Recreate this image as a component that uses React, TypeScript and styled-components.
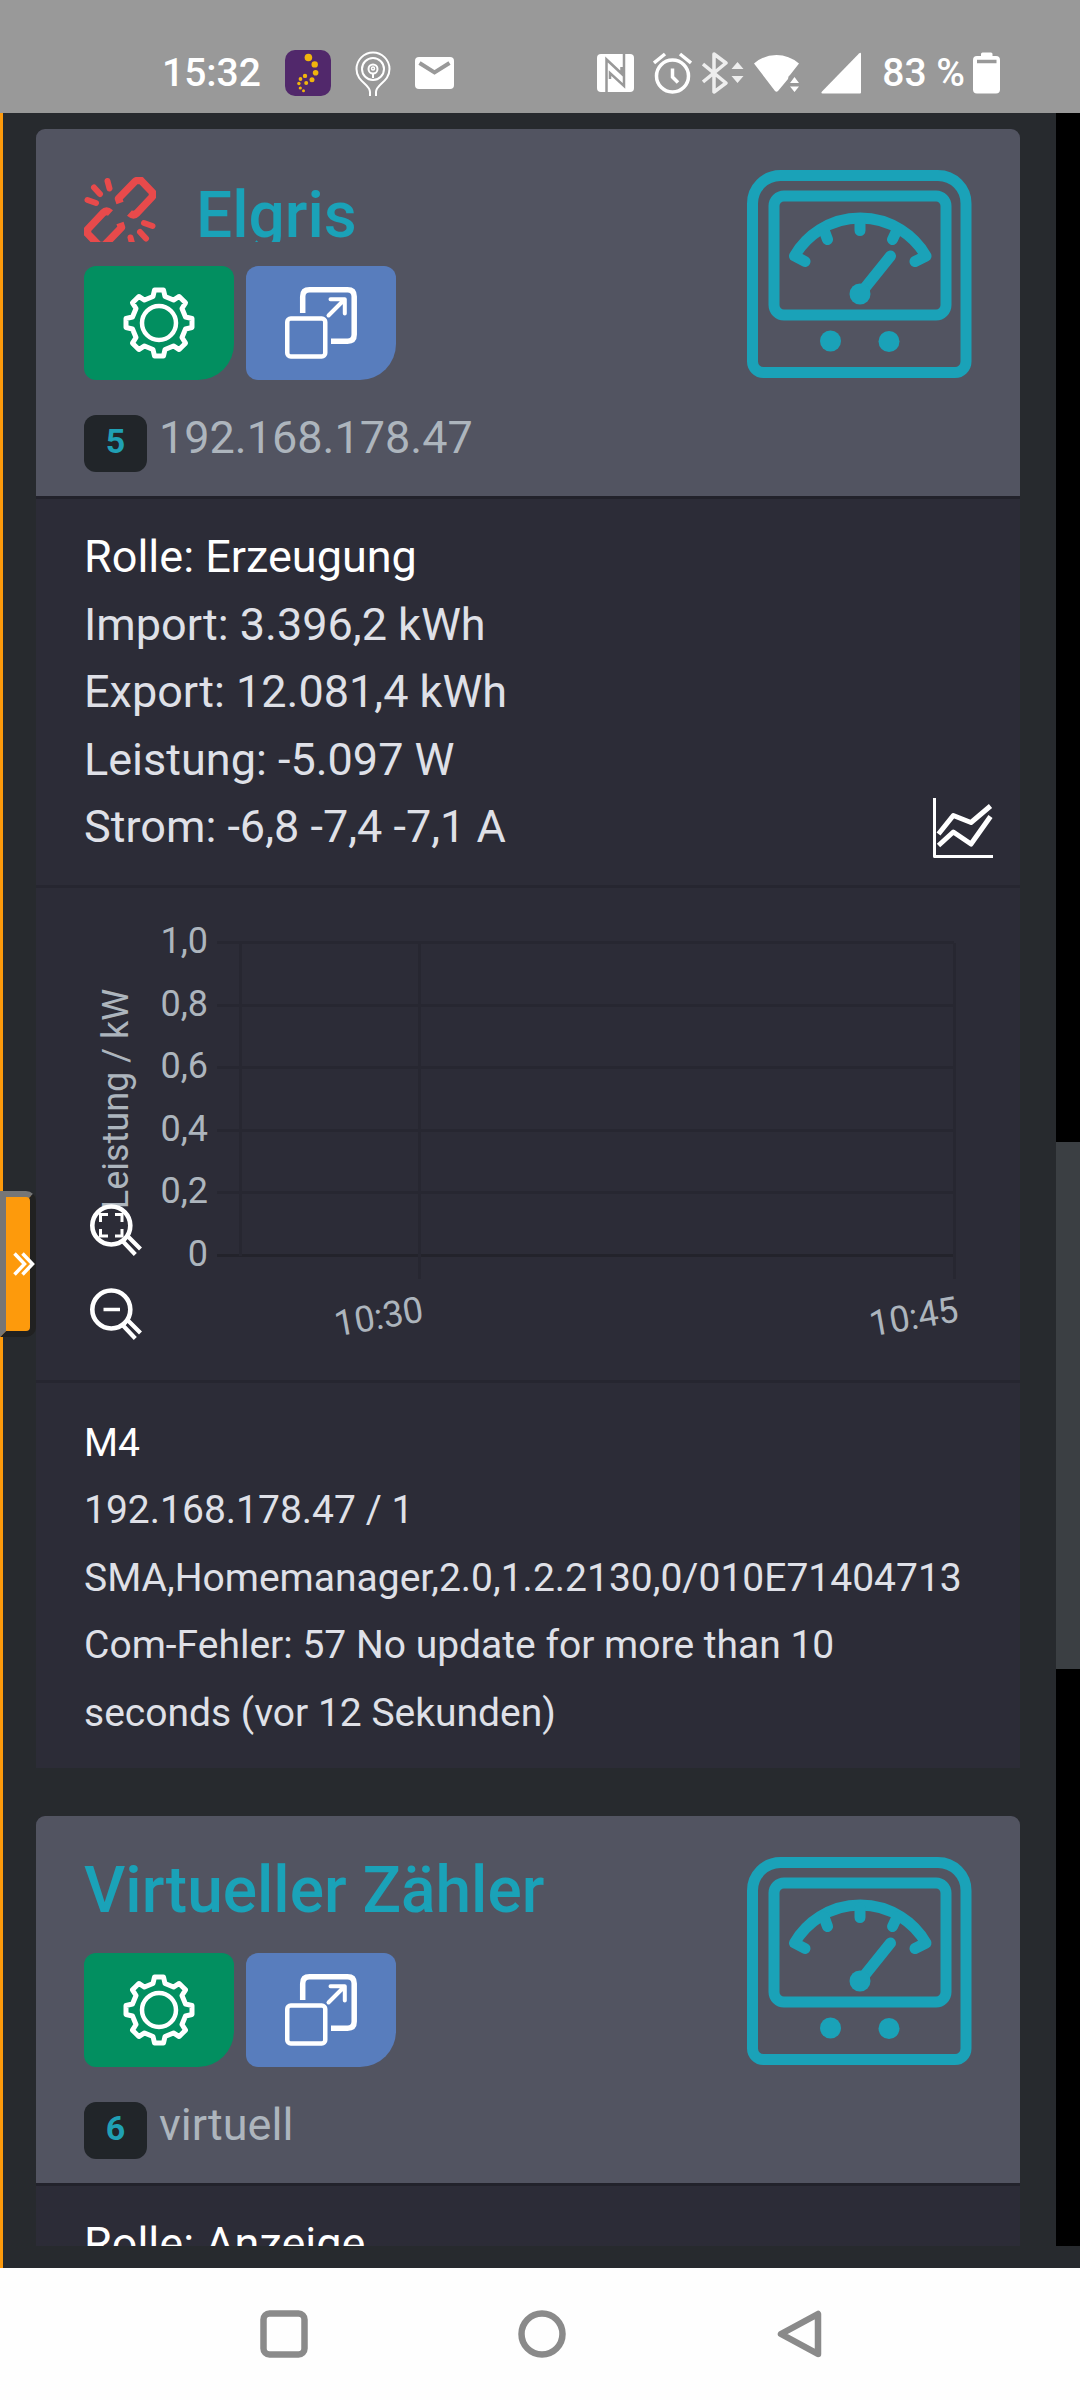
import React from "react";
import styled, { createGlobalStyle } from "styled-components";

const GlobalStyle = createGlobalStyle`
  *, *::before, *::after { box-sizing: border-box; }
  html, body { margin: 0; padding: 0; }
  body {
    background: #272a2e;
    font-family: Roboto, "Noto Sans", sans-serif;
    font-size: 45px;
    line-height: 1.5;
    color: #dfe0e7;
  }
  svg { display: block; flex: none; }
`;

const Screen = styled.div`
  display: flex;
  flex-direction: column;
  height: 100vh;
`;

/* ---------- system bars ---------- */

const StatusBar = styled.header`
  display: flex;
  flex: none;
  align-items: center;
  justify-content: space-between;
  height: 113px;
  padding: 33px 80px 0 162px;
  background: #999999;
  color: #ffffff;
  font-size: 39px;
  font-weight: 500;
  line-height: 48px;
`;

const StatusGroup = styled.div<{ $gap: number }>`
  display: flex;
  align-items: center;
  gap: ${(p) => p.$gap}px;
`;

const NavBar = styled.nav`
  display: flex;
  flex: none;
  align-items: center;
  justify-content: center;
  gap: 210px;
  height: 132px;
  padding-left: 4px;
  background: #fefefe;
`;

const BareButton = styled.button`
  display: block;
  margin: 0;
  padding: 0;
  border: 0;
  background: none;
  color: inherit;
  font: inherit;
`;

/* ---------- app shell ---------- */

const Main = styled.main`
  position: relative;
  display: flex;
  flex: 1;
  flex-direction: column;
  min-height: 0;
  padding-bottom: 22px;
  border-left: 3px solid #fd9a0c;
`;

const Viewport = styled.div`
  display: flex;
  flex: 1;
  min-height: 0;
`;

const Cards = styled.div`
  display: flex;
  flex: 1;
  flex-direction: column;
  gap: 48px;
  min-width: 0;
  padding: 16px 36px 0 33px;
  overflow: hidden;
`;

const Track = styled.div`
  display: grid;
  flex: none;
  grid-template-rows: 1029fr 528fr 577fr;
  width: 24px;
  background: #000000;
`;

const Thumb = styled.div`
  grid-row: 2;
  background: #3b3f43;
`;

const DrawerTab = styled.button`
  position: absolute;
  top: 50%;
  left: -3px;
  display: flex;
  align-items: center;
  width: 36px;
  height: 146px;
  padding: 0 0 0 7px;
  border: 6px solid;
  border-color: #767676 #212121 #212121 #767676;
  border-radius: 0 10px 10px 0;
  background: #fd9a0c;
`;

/* ---------- meter card ---------- */

const Card = styled.article`
  flex: none;
  border-radius: 9px 9px 0 0;
  background: #2c2c37;
`;

const CardHeader = styled.header`
  display: flex;
  justify-content: space-between;
  height: 370px;
  padding: 36px 48px 0;
  border-bottom: 3px solid #22222b;
  border-radius: 9px 9px 0 0;
  background: #525461;
`;

const HeaderMain = styled.div`
  display: flex;
  flex-direction: column;
  align-items: flex-start;
`;

const Title = styled.h2<{ $offline: boolean }>`
  display: flex;
  gap: 40px;
  height: 77px;
  margin: 0;
  padding-top: ${(p) => (p.$offline ? 12 : 0)}px;
  overflow: hidden;
  color: #1aa2b8;
  font-size: 64px;
  font-weight: 500;
  line-height: 77px;
  white-space: nowrap;
`;

const Actions = styled.div`
  display: flex;
  gap: 12px;
  margin-top: 24px;
`;

const ActionButton = styled.button<{ $tone: "green" | "blue" }>`
  display: flex;
  align-items: center;
  justify-content: center;
  width: 150px;
  height: 114px;
  padding: 0;
  border: 0;
  border-radius: 12px 12px 36px 12px;
  background: ${(p) => (p.$tone === "green" ? "#028f60" : "#587dbd")};
  color: #ffffff;
`;

const Address = styled.div`
  display: flex;
  gap: 12px;
  margin-top: 24px;
  color: #adb5bd;
`;

const Badge = styled.span`
  flex: none;
  min-width: 63px;
  height: 57px;
  margin-top: 11px;
  border-radius: 12px;
  background: #212529;
  color: #20a0b4;
  font-size: 34px;
  font-weight: 700;
  line-height: 53px;
  text-align: center;
`;

const MeterSlot = styled.div`
  padding-top: 5px;
  color: #1aa2b8;
`;

const Section = styled.section<{ $wide?: boolean }>`
  display: flex;
  align-items: flex-end;
  justify-content: space-between;
  padding: 24px ${(p) => (p.$wide ? 24 : 48)}px 24px 48px;

  & + & {
    border-top: 3px solid #262630;
  }
`;

const ChartSection = styled(Section)`
  position: relative;
  display: block;
  padding: 0;
`;

const Lines = styled.ul`
  margin: 0;
  padding: 0;
  list-style: none;
`;

const Line = styled.li<{ $lead?: boolean }>`
  color: ${(p) => (p.$lead ? "#ffffff" : "inherit")};
`;

const Small = styled.small`
  font-size: 39px;
`;

const ChartToggle = styled(BareButton)`
  padding: 3px;
  color: #ffffff;
`;

const ChartSvg = styled.svg`
  width: 100%;
  height: auto;

  text {
    fill: #adb5bd;
    font-size: 36px;
  }
`;

const ZoomTools = styled.div`
  position: absolute;
  bottom: 40px;
  left: 54px;
  display: flex;
  flex-direction: column;
  gap: 32px;
  color: #ffffff;
`;

/* ---------- icons ---------- */

const stroke = {
  fill: "none",
  stroke: "currentColor",
  strokeLinecap: "round",
  strokeLinejoin: "round",
} as const;

const MeterIcon = () => (
  <svg width="225" height="208" viewBox="0 0 225 208" {...stroke} strokeWidth="11">
    <path d="M5.500 33.500A28 28 0 0 1 33.500 5.500H191a28 28 0 0 1 28 28V191.500a11 11 0 0 1-11 11H16.500a11 11 0 0 1-11-11Z" />
    <rect x="27" y="26" width="172" height="119" rx="10" />
    <path d="M58 91.500L47.500 86A76 76 0 0 1 179 86L168 91.500" />
    <path d="M113 51V60.500M77 60L80.500 69.500M150 60L145.500 69.500M113 124L143.500 86" />
    <g fill="currentColor" stroke="none">
      <circle cx="113" cy="124" r="10.500" />
      <circle cx="83.500" cy="171" r="10.500" />
      <circle cx="142" cy="171.500" r="10.500" />
    </g>
  </svg>
);

const LINK_HALF = "M36 26L34.500 21.500L51 4.500Q52 3.500 54 3.500H57L68.500 15.500V19.500L53 36Q49.500 39.500 45.500 36";

const BrokenLinkIcon = () => (
  <svg width="72" height="72" viewBox="0 0 72 72" {...stroke} strokeLinecap="butt" color="#e84a4b">
    {[0, 180].map((a) => (
      <g key={a} transform={`rotate(${a} 36 36)`}>
        <path d={LINK_HALF} strokeWidth="7.500" />
        <path d="M23.500 4L25.500 11.500M10 10.500L16 17M3.500 23L12 26" strokeWidth="6" strokeLinecap="round" />
      </g>
    ))}
  </svg>
);

const gearPath = () => {
  const tooth = [[-6, -26.5], [-4.5, -33], [4.5, -33], [6, -26.5]];
  const points: string[] = [];
  for (let k = 0; k < 8; k += 1) {
    const a = (k * Math.PI) / 4;
    tooth.forEach(([x, y]) => {
      const px = 36 + x * Math.cos(a) - y * Math.sin(a);
      const py = 36 + x * Math.sin(a) + y * Math.cos(a);
      points.push(`${px.toFixed(2)} ${py.toFixed(2)}`);
    });
  }
  return `M${points.join("L")}Z`;
};

const GearIcon = () => (
  <svg width="72" height="72" viewBox="0 0 72 72" {...stroke} strokeWidth="5">
    <path d={gearPath()} />
    <circle cx="36" cy="36" r="17" strokeWidth="4.500" />
  </svg>
);

const PopOutIcon = () => (
  <svg width="72" height="72" viewBox="0 0 72 72" {...stroke} strokeWidth="4.500">
    <rect x="2.250" y="31.500" width="38" height="38" rx="3.500" />
    <path d="M17.700 26V9.500Q17.700 2.800 24.500 2.800H62.500Q69.200 2.800 69.200 9.500V47.500Q69.200 54.200 62.500 54.200H46" strokeWidth="5.500" strokeLinecap="butt" />
    <path d="M45.500 12.200H59.800V26.500M59.500 12.500L43.500 28.500" strokeWidth="4" />
  </svg>
);

const LineChartIcon = () => (
  <svg width="60" height="60" viewBox="0 0 60 60" fill="none" stroke="currentColor" strokeLinejoin="round">
    <path d="M1.500 0V58.500H60" strokeWidth="3" />
    <path d="M5.500 36L20.300 17.500L38 24.500L57.500 8M5.500 47.500L20.300 34L38 46L57.500 18.500" strokeWidth="5" />
  </svg>
);

const Magnifier = ({ children }: { children: React.ReactNode }) => (
  <svg width="52" height="52" viewBox="0 0 52 52" fill="none" stroke="currentColor">
    <circle cx="21.300" cy="21.500" r="19" strokeWidth="4.600" />
    <path d="M33 37.500L45.300 50.500M38 32.500L50.500 45" strokeWidth="4.200" />
    {children}
  </svg>
);

const ChevronsIcon = () => (
  <svg width="23" height="24" viewBox="0 0 23 24" fill="none" stroke="#ffffff" strokeWidth="3.500">
    <path d="M1.500 1.500L11.500 12L1.500 22.500M9.500 1.500L19.500 12L9.500 22.500" />
  </svg>
);

/* ---------- status icons ---------- */

const AppBadgeIcon = () => (
  <svg width="46" height="46" viewBox="0 0 46 46">
    <rect width="46" height="46" rx="10" fill="#51286b" />
    <g fill="#f0b50d">
      <circle cx="23.400" cy="7.500" r="3.800" />
      <circle cx="29.700" cy="14.400" r="3.200" />
      <circle cx="30.600" cy="22.800" r="2.800" />
      <circle cx="27" cy="29.700" r="2.500" />
      <circle cx="21.200" cy="33.100" r="2" />
      <circle cx="20" cy="25.900" r="2.200" />
      <circle cx="15.500" cy="29" r="1.900" />
      <circle cx="13.900" cy="33.500" r="1.700" />
      <circle cx="15.300" cy="38" r="1.600" />
      <circle cx="18.500" cy="40.700" r="1.500" />
    </g>
  </svg>
);

const BeaconIcon = () => (
  <svg width="36" height="45" viewBox="0 0 36 45" fill="none" stroke="#ffffff" strokeWidth="2">
    <path d="M15 45V41C15 33 1.500 31 1.500 18A16.500 16.500 0 0 1 34.500 18C34.500 31 21 33 21 41V45" />
    <circle cx="18" cy="18" r="11" />
    <circle cx="18" cy="18" r="4.500" />
    <path d="M18 23V27" />
    <circle cx="18" cy="17.500" r="1.500" strokeWidth="1.500" />
  </svg>
);

const MailIcon = () => (
  <svg width="39" height="32" viewBox="0 0 39 32">
    <rect width="39" height="32" rx="4" fill="#ffffff" />
    <path d="M4.500 6L19.500 15.500L34.500 6" fill="none" stroke="#999999" strokeWidth="4" />
  </svg>
);

const NfcIcon = () => (
  <svg width="46" height="38" viewBox="0 0 46 38">
    <rect width="37" height="38" rx="4" fill="#ffffff" />
    <path d="M9.500 38V5.500L24.500 19.500V13M27 0V32L13 19V25" fill="none" stroke="#999999" strokeWidth="2.500" />
  </svg>
);

const AlarmIcon = () => (
  <svg width="39" height="42" viewBox="0 0 39 42" fill="none" stroke="#ffffff" strokeWidth="3.500">
    <circle cx="19.500" cy="24" r="16" />
    <path d="M19.500 16.500V25L25 30.500M1 11L12 2M38 11L27 2" />
  </svg>
);

const BluetoothIcon = () => (
  <svg width="42" height="42" viewBox="0 0 42 42" fill="none" stroke="#eeeeee" strokeWidth="3.500">
    <path d="M1 12L24 31L12 40V2L24 11L1 30" strokeLinejoin="round" />
    <path d="M35.500 10L41.500 17H29.500ZM35.500 31L41.500 24H29.500Z" fill="#eeeeee" stroke="none" />
  </svg>
);

const WifiIcon = () => (
  <svg width="57" height="42" viewBox="0 0 57 42" fill="#ffffff">
    <path d="M0 11.500Q10 3 22.500 3T45 11.500L36 23Q34 24 34 27L24 39Q22.500 40.500 21 39Z" />
    <path d="M40.500 25L45 31H36ZM40.500 40L45 34.500H36Z" />
  </svg>
);

const SignalIcon = () => (
  <svg width="51" height="42" viewBox="0 0 51 42" fill="#ffffff">
    <path d="M1 39.500L38 1.500Q40 0 40 2V40.500Q40 41.500 39 41.500H1.500Q-.5 41.500 1 39.500Z" />
  </svg>
);

const BatteryIcon = () => (
  <svg width="27" height="42" viewBox="0 0 27 42">
    <path d="M8 4V2Q8 .5 9.500 .5H18Q19.500 .5 19.500 2V4H23Q27 4 27 8V37.500Q27 41.500 23 41.500H4Q0 41.500 0 37.500V8Q0 4 4 4Z" fill="#ffffff" />
    <path d="M4 9.500H23.500" stroke="#999999" strokeWidth="3.500" />
  </svg>
);

/* ---------- chart ---------- */

const Y_TICKS = ["1,0", "0,8", "0,6", "0,4", "0,2", "0"];
const X_TICKS = [
  { label: "10:30", x: 383 },
  { label: "10:45", x: 918 },
];
const TOP = 55;
const BOTTOM = 368;

const PowerChart = () => (
  <ChartSvg viewBox="0 0 984 492" role="img" aria-label="Leistung / kW">
    <g stroke="#272731" strokeWidth="3">
      {Y_TICKS.map((t, i) => {
        const y = Math.round(TOP + ((BOTTOM - TOP) * i) / (Y_TICKS.length - 1)) - 0.5;
        return <line key={t} x1="181" x2="918" y1={y} y2={y} stroke={t === "0" ? "#23232b" : undefined} />;
      })}
      <line x1="204.500" x2="204.500" y1={TOP} y2={BOTTOM} />
      {X_TICKS.map((t) => (
        <line key={t.label} x1={t.x + 0.5} x2={t.x + 0.5} y1={TOP} y2="391" />
      ))}
    </g>
    {Y_TICKS.map((t, i) => (
      <text key={t} x="172" y={Math.round(65 + ((BOTTOM - TOP) * i) / (Y_TICKS.length - 1))} textAnchor="end">
        {t}
      </text>
    ))}
    {X_TICKS.map((t) => (
      <text key={t.label} transform={`translate(${t.x + 6} 433) rotate(-10)`} textAnchor="end">
        {t.label}
      </text>
    ))}
    <text transform="translate(92 211) rotate(-90)" textAnchor="middle">
      Leistung / kW
    </text>
  </ChartSvg>
);

/* ---------- card ---------- */

type MeterProps = {
  id: number;
  name: string;
  address: string;
  offline?: boolean;
  values: string[];
  details?: string[];
};

const MeterCard = ({ id, name, address, offline = false, values, details }: MeterProps) => (
  <Card>
    <CardHeader>
      <HeaderMain>
        <Title $offline={offline}>
          {offline && <BrokenLinkIcon />}
          <span>{name}</span>
        </Title>
        <Actions>
          <ActionButton type="button" $tone="green" aria-label="Einstellungen">
            <GearIcon />
          </ActionButton>
          <ActionButton type="button" $tone="blue" aria-label="Öffnen">
            <PopOutIcon />
          </ActionButton>
        </Actions>
        <Address>
          <Badge>{id}</Badge>
          <span>{address}</span>
        </Address>
      </HeaderMain>
      <MeterSlot>
        <MeterIcon />
      </MeterSlot>
    </CardHeader>
    <Section $wide>
      <Lines>
        {values.map((v, i) => (
          <Line key={v} $lead={i === 0}>
            {v}
          </Line>
        ))}
      </Lines>
      {details && (
        <ChartToggle type="button" aria-label="Diagramm">
          <LineChartIcon />
        </ChartToggle>
      )}
    </Section>
    {details && (
      <>
        <ChartSection>
          <PowerChart />
          <ZoomTools>
            <BareButton type="button" aria-label="Zoom anpassen">
              <Magnifier>
                <path d="M10.500 18V10.500H18M25 10.500H32V18M32 25V32H25M18 32H10.500V25" strokeWidth="3" />
              </Magnifier>
            </BareButton>
            <BareButton type="button" aria-label="Verkleinern">
              <Magnifier>
                <path d="M13.500 21.500H30" strokeWidth="3.500" />
              </Magnifier>
            </BareButton>
          </ZoomTools>
        </ChartSection>
        <Section>
          <Lines>
            {details.map((d, i) => (
              <Line key={d} $lead={i === 0}>
                <Small>{d}</Small>
              </Line>
            ))}
          </Lines>
        </Section>
      </>
    )}
  </Card>
);

export default function App() {
  return (
    <Screen>
      <GlobalStyle />
      <StatusBar>
        <StatusGroup $gap={24}>
          <time>15:32</time>
          <AppBadgeIcon />
          <BeaconIcon />
          <MailIcon />
        </StatusGroup>
        <StatusGroup $gap={10}>
          <NfcIcon />
          <AlarmIcon />
          <BluetoothIcon />
          <WifiIcon />
          <SignalIcon />
          <StatusGroup $gap={8}>
            <span>83 %</span>
            <BatteryIcon />
          </StatusGroup>
        </StatusGroup>
      </StatusBar>
      <Main>
        <Viewport>
          <Cards>
            <MeterCard
              id={5}
              name="Elgris"
              address="192.168.178.47"
              offline
              values={[
                "Rolle: Erzeugung",
                "Import: 3.396,2 kWh",
                "Export: 12.081,4 kWh",
                "Leistung: -5.097 W",
                "Strom: -6,8 -7,4 -7,1 A",
              ]}
              details={[
                "M4",
                "192.168.178.47 / 1",
                "SMA,Homemanager,2.0,1.2.2130,0/010E71404713",
                "Com-Fehler: 57 No update for more than 10 seconds (vor 12 Sekunden)",
              ]}
            />
            <MeterCard id={6} name="Virtueller Zähler" address="virtuell" values={["Rolle: Anzeige"]} />
          </Cards>
          <Track>
            <Thumb />
          </Track>
        </Viewport>
        <DrawerTab type="button" aria-label="Menü öffnen">
          <ChevronsIcon />
        </DrawerTab>
      </Main>
      <NavBar>
        <BareButton type="button" aria-label="Übersicht">
          <svg width="48" height="48" viewBox="0 0 48 48" fill="none" stroke="#8a8a8a" strokeWidth="6.500">
            <rect x="3.500" y="3.500" width="41" height="41" rx="6" />
          </svg>
        </BareButton>
        <BareButton type="button" aria-label="Startseite">
          <svg width="48" height="48" viewBox="0 0 48 48" fill="none" stroke="#8a8a8a" strokeWidth="6.500">
            <circle cx="24" cy="24" r="20.500" />
          </svg>
        </BareButton>
        <BareButton type="button" aria-label="Zurück">
          <svg width="48" height="48" viewBox="0 0 48 48" fill="none" stroke="#8a8a8a" strokeWidth="6.500" strokeLinejoin="round">
            <path d="M42 4V44L5 24Z" />
          </svg>
        </BareButton>
      </NavBar>
    </Screen>
  );
}
